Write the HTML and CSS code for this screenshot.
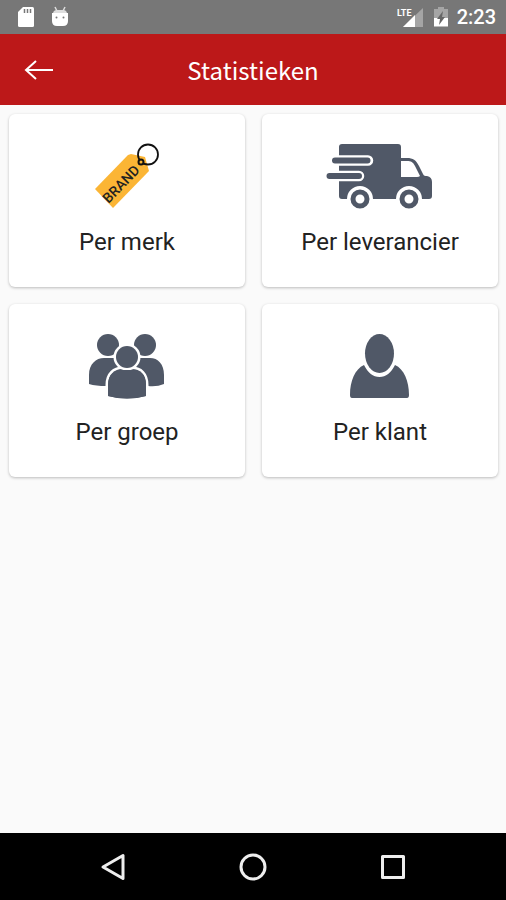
FILE: index.html
```html
<!DOCTYPE html>
<html lang="nl">
  <head>
    <meta charset="UTF-8" />
    <meta name="viewport" content="width=device-width, initial-scale=1.0" />
    <title>Statistieken</title>
    <link rel="stylesheet" href="styles.css">
  </head>
  <body>
    <!-- Status bar -->
    <div class="status-bar">
      <div class="status-left">
        <svg width="18" height="22" viewBox="0 0 18 22">
          <path d="M6 1h9.500a1.500 1.500 0 0 1 1.500 1.500v17a1.500 1.500 0 0 1-1.500 1.500h-13A1.500 1.500 0 0 1 1 19.500V6z" fill="#fff" />
          <path d="M7.500 3v4M10.500 3v4M13.500 3v4" stroke="#777" stroke-width="1.500" />
        </svg>
        <svg width="18" height="22" viewBox="0 0 18 22">
          <path d="M4 1l2 4M14 1l-2 4" stroke="#ddd" stroke-width="1.500" />
          <path d="M2 8q0-4 4-4h6q4 0 4 4z" fill="#ddd" />
          <path d="M1 7h16v8q0 5-5 5H6q-5 0-5-5z" fill="#fff" />
          <circle cx="5.500" cy="11.500" r="1" fill="#777" />
          <circle cx="12.500" cy="11.500" r="1" fill="#777" />
        </svg>
      </div>
      <div class="status-right">
        <svg width="28" height="22" viewBox="0 0 28 22">
          <path d="M26 2v19H6z" fill="#a5a5a5" />
          <path d="M18 9v12H6z" fill="#fff" />
          <text class="lte" x="0" y="10">LTE</text>
        </svg>
        <svg width="16" height="22" viewBox="0 0 16 22">
          <path d="M1 3h4V1h6v2h4v9H1z" fill="#a5a5a5" />
          <path d="M1 12h14v8.500H1z" fill="#fff" />
          <path d="M10 5l-6 8h3l-1 6 6-8H9z" fill="#666" />
        </svg>
        <span class="clock">2:23</span>
      </div>
    </div>

    <!-- Header -->
    <header class="header">
      <button class="back-button" aria-label="Terug">
        <svg width="30" height="22" viewBox="0 0 30 22">
          <path d="M12 2L2 11l10 9M2 11h27" fill="none" stroke="#fff" stroke-width="2" />
        </svg>
      </button>
      <h1>Statistieken</h1>
    </header>

    <!-- Statistics menu -->
    <main class="menu">
      <button class="card">
        <svg width="110" height="66" viewBox="0 0 110 66">
          <path d="M23 46L56 12l3-1 14 3 4 14-36 37z" fill="#fbb535" />
          <circle cx="76" cy="11.500" r="10" fill="none" stroke="#111" stroke-width="1.800" />
          <circle cx="69" cy="19" r="2.500" fill="#fbb535" stroke="#111" stroke-width="2" />
          <text class="brand" x="49" y="46" transform="rotate(-46 49 41)">BRAND</text>
        </svg>
        <span>Per merk</span>
      </button>

      <button class="card">
        <svg width="110" height="66" viewBox="0 0 110 66">
          <path class="icon-fill" d="M17 1h56q3 0 3 3v11h6c6 0 9 2 12 8l4 8c1 2 2 2 4 2q5 1 5 6v14q0 3-3 3H17q-3 0-3-3V4q0-3 3-3z" />
          <path d="M76 18h6c4 0 6 1 8 5l5 10q-1 1-3 1H76z" fill="#fff" />
          <path class="icon-gap" d="M5 17.500h38M0 33h34" stroke-width="10.500" />
          <path class="icon-line" d="M10 17.500h32.500M4.500 33H34" stroke-width="6" />
          <path d="M22 59V56a13 13 0 0 1 26 0v3zM71 59V56a13 13 0 0 1 26 0v3z" fill="#fff" />
          <circle class="wheel" cx="35" cy="56" r="7" />
          <circle class="wheel" cx="84" cy="56" r="7" />
        </svg>
        <span>Per leverancier</span>
      </button>

      <button class="card">
        <svg width="110" height="66" viewBox="0 0 110 66">
          <circle class="icon-fill" cx="36" cy="12" r="11" />
          <circle class="icon-fill" cx="73" cy="12" r="11" />
          <path class="icon-fill" d="M17 51V42c0-11 7-17 15-17h46c8 0 14 6 14 17v9q-7 3-16 2H34q-10 0-17-2z" />
          <path class="group-front" d="M36 63V52c0-11 7-16 14-16h10c8 0 14 5 14 16v11q-19 5-38 0z" />
          <circle class="group-front" cx="55" cy="24" r="11" />
          <path class="icon-fill" d="M36 63V52c0-11 7-15 14-15h10c8 0 14 4 14 15v11q-19 5-38 0z" />
        </svg>
        <span>Per groep</span>
      </button>

      <button class="card">
        <svg width="110" height="66" viewBox="0 0 110 66">
          <ellipse class="icon-fill" cx="54.500" cy="20.500" rx="14.500" ry="19.500" />
          <path class="icon-fill" d="M39 32c4 8 9 12 15.500 12S66 40 70 32c9 4 14 16 14 30q0 3-2 3H27q-2 0-2-3c0-14 5-26 14-30z" />
        </svg>
        <span>Per klant</span>
      </button>
    </main>

    <!-- Navigation bar -->
    <nav class="nav-bar">
      <button aria-label="Vorige">
        <svg width="28" height="30" viewBox="0 0 28 30">
          <path d="M24 3.500v23L4 15z" />
        </svg>
      </button>
      <button aria-label="Start">
        <svg width="28" height="30" viewBox="0 0 28 30">
          <circle cx="14" cy="15" r="12" />
        </svg>
      </button>
      <button aria-label="Overzicht">
        <svg width="28" height="30" viewBox="0 0 28 30">
          <rect x="3.500" y="4.500" width="21" height="21" />
        </svg>
      </button>
    </nav>
  </body>
</html>
```

FILE: styles.css
```css
* {
  box-sizing: border-box;
}

body {
  display: flex;
  flex-direction: column;
  min-height: 100vh;
  margin: 0;
  background-color: #fafafa;
  font-family: Roboto, sans-serif;
}

button {
  padding: 0;
  border: none;
  background: none;
  font-family: inherit;
  cursor: pointer;
}

svg {
  display: block;
}

/* Status bar */
.status-bar {
  display: flex;
  align-items: center;
  justify-content: space-between;
  height: 34px;
  padding: 0 10px 0 17px;
  background-color: #777;
  color: #fff;
}

.status-left,
.status-right {
  display: flex;
  align-items: center;
}

.status-left {
  gap: 16px;
}

.status-right {
  gap: 8px;
}

.clock {
  font-size: 20px;
  font-weight: 500;
  line-height: 22px;
}

.lte {
  fill: #fff;
  font-size: 9px;
  font-weight: bold;
}

/* Header */
.header {
  display: grid;
  grid-template-columns: 30px 1fr 30px;
  align-items: center;
  height: 71px;
  padding: 0 24px;
  background-color: #bc1819;
  color: #fff;
}

.header h1 {
  margin: 0;
  font-family: "Noto Sans CJK SC", sans-serif;
  font-size: 24px;
  font-weight: normal;
  line-height: 36px;
  text-align: center;
}

/* Menu cards */
.menu {
  flex: 1;
  display: grid;
  grid-template-columns: 1fr 1fr;
  align-content: start;
  gap: 17px;
  padding: 9px 8px 9px 9px;
}

.card {
  display: flex;
  flex-direction: column;
  align-items: center;
  gap: 19px;
  padding: 29px 8px 30px;
  border-radius: 6px;
  background-color: #fff;
  box-shadow: 0 1px 3px rgba(0, 0, 0, 0.25);
  color: #222;
  font-size: 24px;
  line-height: 29px;
}

.icon-fill {
  fill: #505867;
}

.icon-gap,
.icon-line {
  fill: none;
  stroke: #fff;
  stroke-linecap: round;
}

.icon-line {
  stroke: #505867;
}

.wheel {
  fill: #fff;
  stroke: #505867;
  stroke-width: 5;
}

.group-front {
  fill: #505867;
  stroke: #fff;
  stroke-width: 5;
  paint-order: stroke;
}

.brand {
  fill: #222;
  font-size: 14px;
  font-weight: 500;
  text-anchor: middle;
}

/* Navigation bar */
.nav-bar {
  display: flex;
  align-items: center;
  justify-content: space-around;
  height: 67px;
  padding: 0 43px;
  background-color: #000;
}

.nav-bar svg {
  fill: none;
  stroke: #eee;
  stroke-width: 3;
  stroke-linejoin: round;
}
```
